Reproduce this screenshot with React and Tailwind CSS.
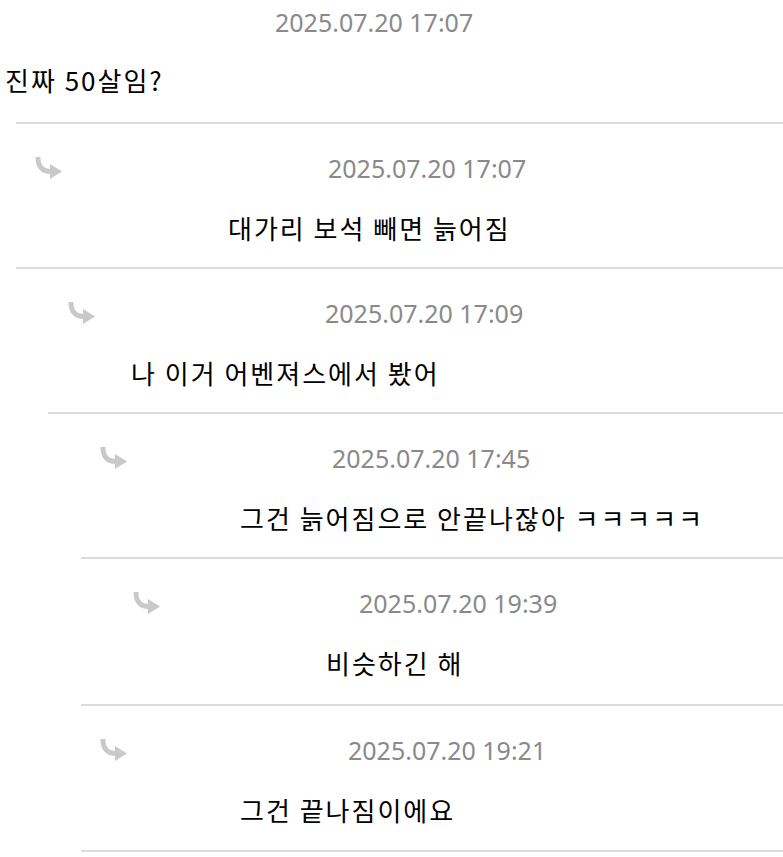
import React from 'react';

const rows = [
  { date: '2025.07.20 17:07', text: '진짜 50살임?', head: 'pl-[275px]', dateMl: '', textPl: 'pl-[5px]', pb: 'pb-[24px]', line: 'ml-[16px]', top: true },
  { date: '2025.07.20 17:07', text: '대가리 보석 빼면 늙어짐', head: 'pl-[35px]', dateMl: 'ml-[266px]', textPl: 'pl-[228px]', pb: 'pb-[21px]', line: 'ml-[16px]' },
  { date: '2025.07.20 17:09', text: '나 이거 어벤져스에서 봤어', head: 'pl-[68px]', dateMl: 'ml-[230px]', textPl: 'pl-[131px]', pb: 'pb-[21px]', line: 'ml-[48px]' },
  { date: '2025.07.20 17:45', text: '그건 늙어짐으로 안끝나잖아 ㅋㅋㅋㅋㅋ', head: 'pl-[100px]', dateMl: 'ml-[205px]', textPl: 'pl-[240px]', pb: 'pb-[21px]', line: 'ml-[81px]' },
  { date: '2025.07.20 19:39', text: '비슷하긴 해', head: 'pl-[133px]', dateMl: 'ml-[199px]', textPl: 'pl-[326px]', pb: 'pb-[23px]', line: 'ml-[81px]' },
  { date: '2025.07.20 19:21', text: '그건 끝나짐이에요', head: 'pl-[100px]', dateMl: 'ml-[221px]', textPl: 'pl-[240px]', pb: 'pb-[22px]', line: 'ml-[81px]' },
];

function ReplyArrow() {
  return (
    <svg width="27" height="22" viewBox="0 0 27 22" className="shrink-0">
      <path d="M3 1 C3 9 7 14.5 16 14.5" fill="none" stroke="#c9c9c9" strokeWidth="5" strokeLinecap="round" />
      <polygon points="15,7 27,14.5 15,22" fill="#c9c9c9" />
    </svg>
  );
}

export default function App() {
  return (
    <div className="w-[783px] min-h-[857px] bg-white overflow-hidden" style={{ fontFamily: '"Noto Sans", "Noto Sans CJK KR", sans-serif' }}>
      {rows.map((r, i) => (
        <div key={i}>
          <div className={r.top ? 'pt-[8px]' : 'pt-[30px]'}>
            <div className={`flex items-center h-7 ${r.head}`}>
              {!r.top && <ReplyArrow />}
              <span className={`text-[25px] leading-7 text-[#8a8a8a] whitespace-nowrap ${r.dateMl}`}>{r.date}</span>
            </div>
            <p
              className={`${r.top ? 'mt-[26px]' : 'mt-[28px]'} ${r.pb} ${r.textPl} text-[26px] leading-9 tracking-[2px] text-black whitespace-nowrap`}
              style={{ fontFamily: '"Noto Sans CJK KR", "Noto Sans", sans-serif' }}
            >
              {r.text}
            </p>
          </div>
          <div className={`h-[2px] bg-[#dcdcdc] ${r.line}`} />
        </div>
      ))}
    </div>
  );
}
